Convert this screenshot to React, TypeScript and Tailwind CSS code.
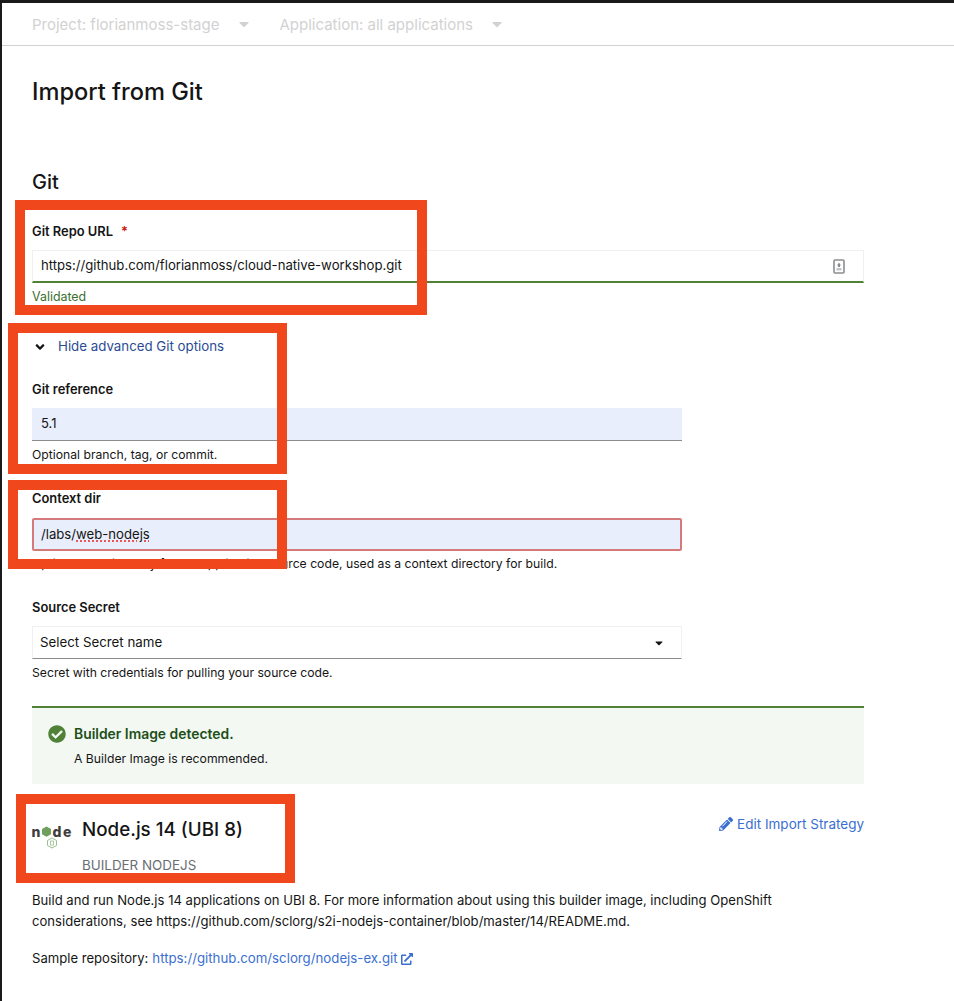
import { FaAngleDown, FaCaretDown, FaCheckCircle, FaExternalLinkAlt, FaPencilAlt } from 'react-icons/fa';

const bodyFont = "font-['Inter','Noto_Sans',sans-serif]";
const labelClass = 'flex h-[19px] items-center text-[12.9px] font-semibold leading-[19px] text-[#151515]';
const helpClass = 'h-[14px] text-[12.2px] leading-[14px] text-[#151515]';

function NodeLogo() {
  return (
    <svg width="42" height="30" viewBox="0 0 42 30">
      <text x="-0.5" y="16.5" fontFamily="Inter, sans-serif" fontWeight="800" fontSize="14" fill="#3f3f3f">n</text>
      <polygon points="14.5,6.5 19,9 19,14.2 14.5,16.8 10,14.2 10,9" fill="#6f9f5d" />
      <text x="20.5" y="16.5" fontFamily="Inter, sans-serif" fontWeight="800" fontSize="14" fill="#3f3f3f">d</text>
      <text x="31" y="16.5" fontFamily="Inter, sans-serif" fontWeight="800" fontSize="14" fill="#3f3f3f">e</text>
      <polygon points="20,18 24.5,20.5 24.5,25.5 20,28 15.5,25.5 15.5,20.5" fill="none" stroke="#9cc08f" strokeWidth="1" />
      <rect x="18.5" y="21" width="3" height="4" fill="none" stroke="#9cc08f" strokeWidth="0.8" />
    </svg>
  );
}

function UploadIcon() {
  return (
    <svg width="12" height="15" viewBox="0 0 12 15" className="text-[#8a8d90]">
      <rect x="1" y="1" width="10" height="13" rx="1" fill="none" stroke="currentColor" strokeWidth="1.6" />
      <path d="M6 3.5 L8 6.5 H7 V8 H5 V6.5 H4 Z" fill="currentColor" />
      <rect x="3.5" y="9" width="5" height="2.5" fill="#c4c4c4" />
    </svg>
  );
}

function Frame({ className }: { className: string }) {
  return <div className={`pointer-events-none absolute border-[10px] border-[#f0471c] ${className}`} />;
}

export default function App() {
  return (
    <div className={`relative h-[1001px] w-[954px] overflow-hidden border-l-2 border-t-[3px] border-[#1a1a1a] bg-white ${bodyFont}`}>
      {/* Context bar */}
      <div className="flex h-[43px] items-center border-b border-[#d2d2d2] pl-[30px] pt-[2px] text-[15px] text-[#d2d2d2]">
        <span>Project: florianmoss-stage</span>
        <FaCaretDown className="ml-[20px] h-[16px] w-[10px] -translate-y-[1px]" />
        <span className="ml-[30px]">Application: all applications</span>
        <FaCaretDown className="ml-[19px] h-[16px] w-[10px] -translate-y-[1px]" />
      </div>

      <div className="pl-[30px]">
        <h1 className="mt-[29px] h-[34px] text-[23.6px] font-medium leading-[34px] text-[#151515]">Import from Git</h1>
        <h2 className="mt-[61px] h-[24px] text-[20px] font-medium leading-[24px] text-[#151515]">Git</h2>

        {/* Git repo url */}
        <div className={`mt-[28px] ${labelClass}`}>
          Git Repo URL<span className="ml-[8px] text-[#c9190b]">*</span>
        </div>
        <div className="mt-[9px] flex h-[33px] w-[832px] items-center justify-between border border-b-2 border-[#f0f0f0] border-b-[#4f8136] pl-[8px] pr-[18px] text-[13.15px] text-[#151515]">
          <span>https://github.com/florianmoss/cloud-native-workshop.git</span>
          <UploadIcon />
        </div>
        <div className="mt-[7px] h-[14px] text-[12.4px] leading-[14px] text-[#3b6f2f]">Validated</div>

        {/* Advanced options */}
        <div className="mt-[33px] flex h-[20px] items-center text-[13.3px] text-[#2b4b94]">
          <FaAngleDown className="ml-[1px] h-[14px] w-[14px] text-[#151515]" />
          <span className="ml-[11px]">Hide advanced Git options</span>
        </div>

        <div className={`mt-[23px] ${labelClass}`}>Git reference</div>
        <div className="mt-[9px] flex h-[33px] w-[650px] items-center border-b border-[#8a8d90] bg-[#e8eefb] pl-[9px] text-[13px] text-[#151515]">5.1</div>
        <div className={`mt-[7px] ${helpClass}`}>Optional branch, tag, or commit.</div>

        <div className={`mt-[27px] ${labelClass}`}>Context dir</div>
        <div className="mt-[10px] flex h-[33px] w-[650px] items-center rounded-[2px] border-2 border-[#d47a7a] bg-[#e8eefb] pl-[7px] text-[13.15px] text-[#151515]">
          /labs/
          <span className="underline decoration-[#e8565a] decoration-dotted decoration-2 underline-offset-2">web-nodejs</span>
        </div>
        <div className={`mt-[6px] ${helpClass}`}>Optional subdirectory for the application source code, used as a context directory for build.</div>

        <div className={`mt-[27px] ${labelClass}`}>Source Secret</div>
        <div className="mt-[9px] flex h-[33px] w-[650px] items-center justify-between border border-[#f0f0f0] border-b-[#8a8d90] pl-[7px] pr-[16px] text-[13.3px] text-[#151515]">
          <span>Select Secret name</span>
          <FaCaretDown className="h-[12px] w-[12px]" />
        </div>
        <div className={`mt-[7px] ${helpClass}`}>Secret with credentials for pulling your source code.</div>

        {/* Alert */}
        <div className="mt-[26px] h-[78px] w-[832px] border-t-2 border-[#4f8136] bg-[#f3f8f3] pl-[16px] pt-[16px]">
          <div className="flex h-[20px] items-center text-[13.9px] font-semibold text-[#1e4f18]">
            <FaCheckCircle className="h-[18px] w-[18px] text-[#4f8136]" />
            <span className="ml-[8px]">Builder Image detected.</span>
          </div>
          <div className="ml-[26px] mt-[7px] h-[16px] text-[12.2px] leading-[16px] text-[#151515]">A Builder Image is recommended.</div>
        </div>

        {/* Builder image */}
        <div className="mt-[31px] flex h-[56px] w-[832px] items-start">
          <div className="mt-[5px] shrink-0"><NodeLogo /></div>
          <div className="ml-[8px] flex-1">
            <div className="h-[30px] text-[18.8px] font-medium leading-[30px] text-[#151515]">Node.js 14 (UBI 8)</div>
            <div className="mt-[13px] text-[13.4px] leading-[14px] text-[#6a6e73]">BUILDER NODEJS</div>
          </div>
          <div className="-mt-[1px] flex items-center text-[13.5px] text-[#3a6fd1]">
            <FaPencilAlt className="h-[14px] w-[14px]" />
            <span className="ml-[4px]">Edit Import Strategy</span>
          </div>
        </div>

        <p className="mt-[19px] w-[832px] text-[13.1px] leading-[21px] text-[#151515]">
          Build and run Node.js 14 applications on UBI 8. For more information about using this builder image, including OpenShift considerations, see https://github.com/sclorg/s2i-nodejs-container/blob/master/14/README.md.
        </p>
        <p className="mt-[16px] flex items-center text-[13.1px] leading-[21px] text-[#151515]">
          Sample repository:
          <span className="ml-[4px] text-[13.25px] text-[#3a6fd1]">https://github.com/sclorg/nodejs-ex.git</span>
          <FaExternalLinkAlt className="ml-[3px] h-[12px] w-[12px] text-[#3a6fd1]" />
        </p>
      </div>

      {/* Annotation frames */}
      <Frame className="left-[13px] top-[197px] h-[115px] w-[412px]" />
      <Frame className="left-[6px] top-[320px] h-[151px] w-[279px]" />
      <Frame className="left-[6px] top-[477px] h-[89px] w-[279px]" />
      <Frame className="left-[14px] top-[791px] h-[89px] w-[279px]" />
    </div>
  );
}
